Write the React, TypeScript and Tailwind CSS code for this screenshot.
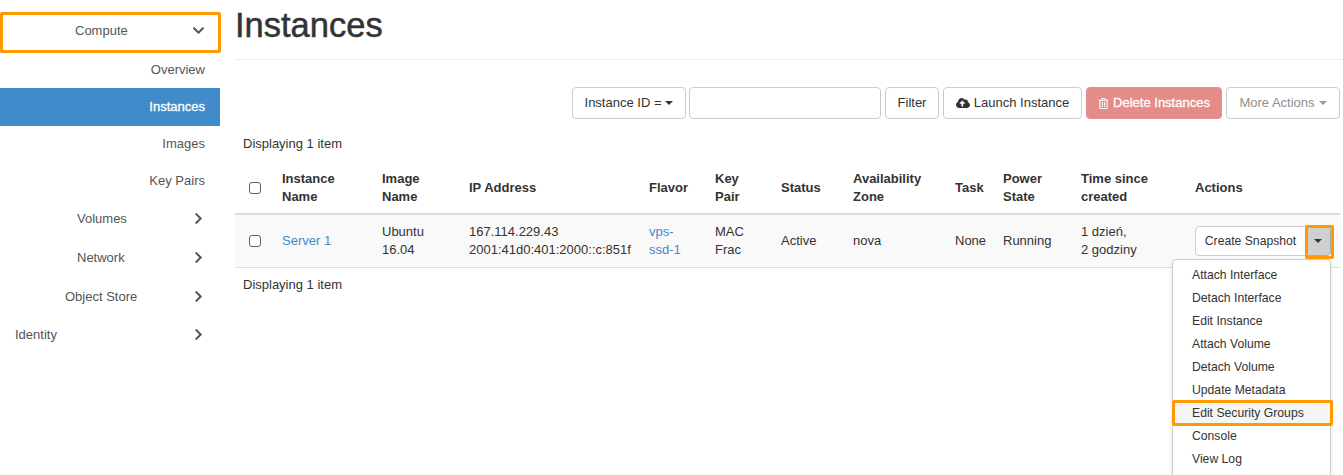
import { FaCloudUploadAlt, FaRegTrashAlt, FaChevronDown, FaChevronRight } from 'react-icons/fa';

const subItems = ['Overview', 'Instances', 'Images', 'Key Pairs'];
const menuItems = ['Attach Interface', 'Detach Interface', 'Edit Instance', 'Attach Volume', 'Detach Volume', 'Update Metadata', 'Edit Security Groups', 'Console', 'View Log'];

function Caret({ className = '' }: { className?: string }) {
  return <span className={`inline-block w-0 h-0 border-x-[4px] border-x-transparent border-t-[4px] ${className}`} />;
}

function Check() {
  return <span className="block ml-[6px] w-[12px] h-[12px] rounded-[3px] border border-[#5f5f5f] bg-white" />;
}

function GroupRow({ label, pad, open, className = 'h-[39px]' }: { label: string; pad: string; open?: boolean; className?: string }) {
  return (
    <div className={`flex items-center text-[#555] ${className}`}>
      <span className={`flex-1 ${pad}`}>{label}</span>
      <span className="w-[44px] pl-[16px]">
        {open ? <FaChevronDown size={13} /> : <FaChevronRight size={13} />}
      </span>
    </div>
  );
}

function Sidebar() {
  return (
    <aside className="w-[220px] shrink-0 pt-[11px] text-[13px]">
      <div className="relative">
        <GroupRow label="Compute" pad="pl-[75px]" open className="h-[40px] pb-[1px]" />
        <div className="absolute left-0 top-[1px] w-[221px] h-[41px] border-[3px] border-[#ff9900] rounded-[2px]" />
      </div>
      {subItems.map((s) => (
        <div
          key={s}
          className={`flex items-center justify-end pr-[15px] ${
            s === 'Instances'
              ? 'h-[38px] pb-[1px] bg-[#428bca] text-white [-webkit-text-stroke:0.3px]'
              : s === 'Key Pairs'
                ? 'h-[36px] text-[#555]'
                : s === 'Images'
                  ? 'h-[37px] pb-[2px] text-[#555]'
                  : 'h-[37px] text-[#555]'
          }`}
        >
          {s}
        </div>
      ))}
      <GroupRow label="Volumes" pad="pl-[77px]" />
      <GroupRow label="Network" pad="pl-[77px]" />
      <GroupRow label="Object Store" pad="pl-[65px]" />
      <GroupRow label="Identity" pad="pl-[15px]" className="h-[39px] pb-[2px]" />
    </aside>
  );
}

function Toolbar() {
  const btn = 'h-[32px] rounded-[4px] border border-[#ccc] bg-white flex items-center justify-center text-[#333]';
  return (
    <div className="flex justify-end gap-[3px] mt-[27px] mr-[3px] text-[13px]">
      <div className={`${btn} w-[114px] gap-[4px]`}>
        Instance ID = <Caret className="border-t-[#333]" />
      </div>
      <div className="w-[192px] h-[32px] rounded-[4px] border border-[#ccc] bg-white" />
      <div className={`${btn} w-[54px] mx-[1px]`}>Filter</div>
      <div className={`${btn} w-[139px] gap-[4px]`}>
        <FaCloudUploadAlt size={14} /> Launch Instance
      </div>
      <div className={`${btn} w-[136px] mx-[1px] gap-[4px] !border-[#e58e8e] !bg-[#e58b88] !text-white [-webkit-text-stroke:0.3px]`}>
        <FaRegTrashAlt size={11} /> Delete Instances
      </div>
      <div className={`${btn} w-[114px] gap-[4px] !text-[#8f8f8f]`}>
        More Actions <Caret className="border-t-[#999]" />
      </div>
    </div>
  );
}

function InstanceTable() {
  const th = 'px-[8px] pt-[2px] align-middle text-left font-bold leading-[18px]';
  const td = 'px-[8px] align-middle leading-[18px] text-[#333]';
  return (
    <table className="table-fixed border-collapse w-[1105px] text-[13px]">
      <colgroup>
        <col className="w-[39px]" />
        <col className="w-[100px]" />
        <col className="w-[87px]" />
        <col className="w-[180px]" />
        <col className="w-[66px]" />
        <col className="w-[66px]" />
        <col className="w-[72px]" />
        <col className="w-[102px]" />
        <col className="w-[48px]" />
        <col className="w-[78px]" />
        <col className="w-[114px]" />
        <col />
      </colgroup>
      <thead>
        <tr className="h-[54px] border-b-2 border-[#ddd] text-[#333]">
          <th className={th}><Check /></th>
          <th className={th}>Instance<br />Name</th>
          <th className={th}>Image<br />Name</th>
          <th className={th}>IP Address</th>
          <th className={th}>Flavor</th>
          <th className={th}>Key<br />Pair</th>
          <th className={th}>Status</th>
          <th className={th}>Availability<br />Zone</th>
          <th className={th}>Task</th>
          <th className={th}>Power<br />State</th>
          <th className={th}>Time since<br />created</th>
          <th className={th}>Actions</th>
        </tr>
      </thead>
      <tbody>
        <tr className="h-[53px] bg-[#f9f9f9] border-b border-[#ddd]">
          <td className={td}><Check /></td>
          <td className={`${td} !text-[#428bca]`}>Server 1</td>
          <td className={td}>Ubuntu<br />16.04</td>
          <td className={`${td} whitespace-nowrap`}>167.114.229.43<br />2001:41d0:401:2000::c:851f</td>
          <td className={`${td} !text-[#428bca]`}>vps-<br />ssd-1</td>
          <td className={td}>MAC<br />Frac</td>
          <td className={td}>Active</td>
          <td className={td}>nova</td>
          <td className={td}>None</td>
          <td className={td}>Running</td>
          <td className={td}>1 dzień,<br />2 godziny</td>
          <td className={td}>
            <div className="flex h-[30px] text-[12.2px]">
              <div className="w-[111px] rounded-l-[4px] border border-[#ccc] bg-white flex items-center justify-center text-[#333]">Create Snapshot</div>
              <div className="w-[26px] -ml-px rounded-r-[4px] border border-[#adadad] bg-[#cfcfcf] flex items-center justify-center">
                <Caret className="border-t-[#333]" />
              </div>
            </div>
          </td>
        </tr>
      </tbody>
    </table>
  );
}

function ActionsMenu() {
  return (
    <div className="absolute left-[1172px] top-[259px] w-[159px] h-[230px] bg-white border border-[#ccc] rounded-[4px] shadow-md pt-[4px] text-[12.2px] text-[#333]">
      {menuItems.map((m) => (
        <div key={m} className={`h-[23px] flex items-center pl-[19px] ${m === 'Edit Security Groups' ? 'bg-[#f5f5f5]' : ''}`}>{m}</div>
      ))}
    </div>
  );
}

export default function App() {
  return (
    <div className="relative w-[1343px] h-[475px] overflow-hidden bg-white flex font-['Liberation_Sans',Arial,sans-serif] text-[#333]">
      <Sidebar />
      <main className="flex-1 pl-[15px]">
        <div className="h-[60px] border-b border-[#eee]">
          <h1 className="text-[34.5px] leading-[50px] [-webkit-text-stroke:0.5px] text-[#333]">Instances</h1>
        </div>
        <Toolbar />
        <p className="pl-[8px] mt-[16px] mb-[7px] text-[13px] leading-[18px]">Displaying 1 item</p>
        <InstanceTable />
        <p className="pl-[8px] mt-[8px] text-[13px] leading-[18px]">Displaying 1 item</p>
      </main>
      <ActionsMenu />
      <div className="absolute left-[1305px] top-[225px] w-[29px] h-[34px] border-[3px] border-[#ff9900] rounded-[2px]" />
      <div className="absolute left-[1172px] top-[400px] w-[161px] h-[26px] border-[3px] border-[#ff9900] rounded-[2px]" />
    </div>
  );
}
